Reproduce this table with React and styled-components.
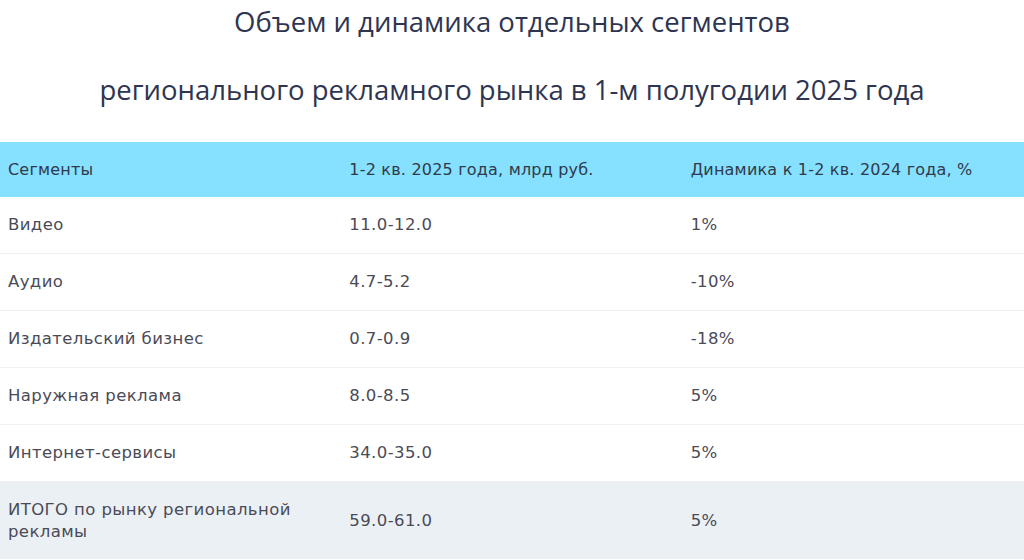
import React from "react";
import styled, { createGlobalStyle } from "styled-components";

const GlobalStyle = createGlobalStyle`
  html, body {
    margin: 0;
    padding: 0;
    background: #ffffff;
  }
  body {
    font-family: "DejaVu Sans", "Liberation Sans", sans-serif;
  }
`;

const Page = styled.div`
  width: 1024px;
  height: 560px;
  overflow: hidden;
  background: #ffffff;
`;

const Title = styled.h2`
  margin: 0 0 30px;
  display: flex;
  flex-direction: column;
  align-items: center;
  gap: 24px;
  color: #2e3550;
  font-family: "Open Sans", "Liberation Sans", sans-serif;
  font-size: 27.5px;
  font-weight: 500;
`;

const TitleLine = styled.span`
  line-height: 44px;
`;

const Table = styled.table`
  width: 100%;
  border-collapse: collapse;
  table-layout: fixed;
`;

const HeadRow = styled.tr`
  background-color: #86e0ff;
`;

const HeaderCell = styled.th`
  height: 55px;
  padding: 0 8px;
  text-align: left;
  font-weight: 400;
  font-size: 16px;
  letter-spacing: 0.2px;
  color: #2f3a4a;
`;

const Row = styled.tr`
  background-color: ${(props) => (props.total ? "#ebf0f5" : "#ffffff")};
  border-bottom: ${(props) => (props.total ? "none" : "1px solid #eef2f6")};
`;

const Cell = styled.td`
  height: ${(props) => (props.tall ? "77px" : "56px")};
  padding: 0 8px;
  font-size: 16.5px;
  letter-spacing: 0.4px;
  line-height: 22px;
  color: #4a4b57;
  vertical-align: middle;
`;

const rows = [
  ["Видео", "11.0-12.0", "1%"],
  ["Аудио", "4.7-5.2", "-10%"],
  ["Издательский бизнес", "0.7-0.9", "-18%"],
  ["Наружная реклама", "8.0-8.5", "5%"],
  ["Интернет-сервисы", "34.0-35.0", "5%"],
];

const App = () => {
  return (
    <Page>
      <GlobalStyle />
      <Title>
        <TitleLine>Объем и динамика отдельных сегментов</TitleLine>
        <TitleLine>регионального рекламного рынка в 1-м полугодии 2025 года</TitleLine>
      </Title>
      <Table>
        <thead>
          <HeadRow>
            <HeaderCell>Сегменты</HeaderCell>
            <HeaderCell>1-2 кв. 2025 года, млрд руб.</HeaderCell>
            <HeaderCell>Динамика к 1-2 кв. 2024 года, %</HeaderCell>
          </HeadRow>
        </thead>
        <tbody>
          {rows.map((row) => (
            <Row key={row[0]}>
              {row.map((value, i) => (
                <Cell key={i}>{value}</Cell>
              ))}
            </Row>
          ))}
          <Row total>
            <Cell tall>ИТОГО по рынку региональной рекламы</Cell>
            <Cell tall>59.0-61.0</Cell>
            <Cell tall>5%</Cell>
          </Row>
        </tbody>
      </Table>
    </Page>
  );
};

export default App;
